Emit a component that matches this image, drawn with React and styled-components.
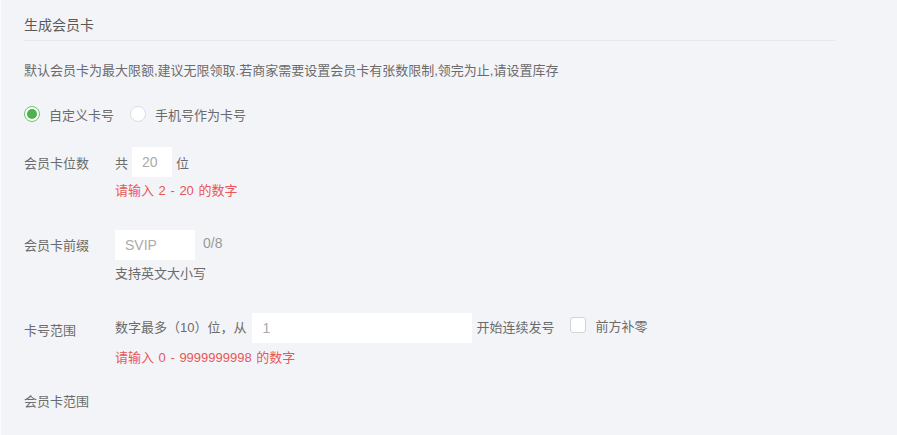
import React, { useState } from 'react';
import styled, { createGlobalStyle } from 'styled-components';

const GlobalStyle = createGlobalStyle`
  html, body {
    margin: 0;
    padding: 0;
    background: #f3f4f8;
  }
  body {
    font-family: "Liberation Sans", "Noto Sans CJK SC", sans-serif;
    font-size: 13px;
    color: #6b6b6b;
  }
`;

// STYLES
const Page = styled.div`
  min-height: 435px;
  box-sizing: border-box;
  border-left: 1px solid #fbfbfd;
  padding-left: 23px;
`;

const Panel = styled.section`
  width: 812px;
`;

const Header = styled.div`
  padding: 15px 0 5px;
  line-height: 20px;
  font-size: 14px;
  color: #595959;
  border-bottom: 1px solid #e6e8ee;
`;

const Notice = styled.p`
  margin: 20px 0 0;
  line-height: 20px;
  color: #6b6b6b;
`;

const RadioGroup = styled.div`
  display: flex;
  align-items: center;
  gap: 16px;
  margin-top: 23px;
  height: 20px;
`;

const RadioOption = styled.label`
  display: flex;
  align-items: center;
  gap: 9px;
  cursor: pointer;
  color: #6b6b6b;
`;

const RadioDot = styled.span`
  width: 16px;
  height: 16px;
  box-sizing: border-box;
  border-radius: 50%;
  border: 1px solid ${(p) => (p.$checked ? '#6cc46c' : '#dcdde2')};
  background: #fff;
  display: flex;
  align-items: center;
  justify-content: center;

  &::after {
    content: '';
    width: 10px;
    height: 10px;
    border-radius: 50%;
    background: ${(p) => (p.$checked ? '#4fb04f' : 'transparent')};
  }
`;

const FieldRow = styled.div`
  display: flex;
  margin-top: ${(p) => p.$top}px;
`;

const FieldLabel = styled.div`
  width: 91px;
  flex-shrink: 0;
  line-height: 30px;
  padding-top: ${(p) => p.$offset || 2}px;
  color: #6b6b6b;
`;

const FieldBody = styled.div`
  display: flex;
  flex-direction: column;
`;

const Line = styled.div`
  display: flex;
  align-items: center;
  height: 30px;
  gap: ${(p) => p.$gap || 4}px;
  color: #6b6b6b;
`;

const InlineText = styled.span`
  margin-top: ${(p) => p.$lift || 0}px;
  margin-right: ${(p) => p.$pad || 0}px;
`;

const TextInput = styled.input`
  width: ${(p) => p.$width}px;
  height: 30px;
  box-sizing: border-box;
  border: none;
  outline: none;
  background: #fff;
  padding: 0 10px;
  font-family: "Liberation Sans", "Noto Sans CJK SC", sans-serif;
  font-size: 14px;
  color: #aaa;

  &::placeholder {
    color: #aaa;
  }
`;

const Counter = styled.span`
  margin-left: 2px;
  margin-top: -4px;
  font-size: 14px;
  color: #999;
`;

const Hint = styled.div`
  margin-top: ${(p) => p.$top || 4}px;
  line-height: 20px;
  word-spacing: 1px;
  color: ${(p) => (p.$error ? '#e95656' : '#6b6b6b')};
`;

const CheckLabel = styled.label`
  display: flex;
  align-items: center;
  gap: 9px;
  margin-left: 12px;
  margin-top: -6px;
  cursor: pointer;
`;

const CheckBox = styled.span`
  width: 16px;
  height: 16px;
  box-sizing: border-box;
  border: 1px solid #d2d3d8;
  border-radius: 3px;
  background: #fff;
`;

const App = () => {
  const [mode, setMode] = useState('custom');
  const [digits, setDigits] = useState('20');
  const [prefix, setPrefix] = useState('');
  const [start, setStart] = useState('1');

  return (
    <Page>
      <GlobalStyle />
      <Panel>
        <Header>生成会员卡</Header>
        <Notice>
          默认会员卡为最大限额,建议无限领取.若商家需要设置会员卡有张数限制,领完为止,请设置库存
        </Notice>

        <RadioGroup>
          <RadioOption onClick={() => setMode('custom')}>
            <RadioDot $checked={mode === 'custom'} />
            自定义卡号
          </RadioOption>
          <RadioOption onClick={() => setMode('phone')}>
            <RadioDot $checked={mode === 'phone'} />
            手机号作为卡号
          </RadioOption>
        </RadioGroup>

        <FieldRow $top={23}>
          <FieldLabel>会员卡位数</FieldLabel>
          <FieldBody>
            <Line>
              <InlineText>共</InlineText>
              <TextInput $width={40} value={digits} onChange={(e) => setDigits(e.target.value)} />
              <InlineText>位</InlineText>
            </Line>
            <Hint $error>请输入 2 - 20 的数字</Hint>
          </FieldBody>
        </FieldRow>

        <FieldRow $top={29}>
          <FieldLabel $offset={1}>会员卡前缀</FieldLabel>
          <FieldBody>
            <Line $gap={6}>
              <TextInput
                $width={80}
                placeholder="SVIP"
                value={prefix}
                onChange={(e) => setPrefix(e.target.value)}
              />
              <Counter>{prefix.length}/8</Counter>
            </Line>
            <Hint>支持英文大小写</Hint>
          </FieldBody>
        </FieldRow>

        <FieldRow $top={29}>
          <FieldLabel $offset={3}>卡号范围</FieldLabel>
          <FieldBody>
            <Line>
              <InlineText $lift={-4} $pad={2}>数字最多（10）位，从</InlineText>
              <TextInput $width={220} value={start} onChange={(e) => setStart(e.target.value)} />
              <InlineText $lift={-4}>开始连续发号</InlineText>
              <CheckLabel>
                <CheckBox />
                前方补零
              </CheckLabel>
            </Line>
            <Hint $error $top={5}>请输入 0 - 9999999998 的数字</Hint>
          </FieldBody>
        </FieldRow>

        <FieldRow $top={17}>
          <FieldLabel>会员卡范围</FieldLabel>
        </FieldRow>
      </Panel>
    </Page>
  );
};

export default App;
